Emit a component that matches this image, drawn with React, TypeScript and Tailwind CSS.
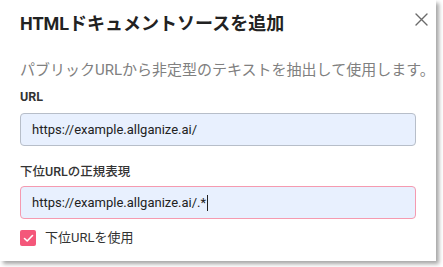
import React from 'react';

const font = { fontFamily: 'Roboto, "Noto Sans CJK JP", sans-serif' };

const CloseIcon: React.FC = () => (
  <svg width="13" height="13" viewBox="0 0 13 13" fill="none" stroke="#6b6b6b" strokeWidth="1.4" strokeLinecap="round">
    <path d="M1 1L12 12M12 1L1 12" />
  </svg>
);

const App: React.FC = () => {
  return (
    <div className="min-h-screen bg-white" style={font}>
      <div className="w-[436px] h-[261px] bg-white shadow-[3px_3px_4px_rgba(0,0,0,0.35)] px-5 pt-[12px]">
        <div className="flex items-start justify-between">
          <h1 className="text-[18px] leading-[24px] font-bold text-[#222]">HTMLドキュメントソースを追加</h1>
          <button className="mt-[1px] mr-[-12px] p-0">
            <CloseIcon />
          </button>
        </div>
        <p className="mt-[23px] whitespace-nowrap text-[15px] leading-[22px] text-[#808080]">
          パブリックURLから非定型のテキストを抽出して使用します。
        </p>
        <label className="block mt-[7px] text-[12.5px] leading-[18px] font-bold text-[#333]">URL</label>
        <div className="mt-[7px] h-[33px] rounded-[4px] border border-[#b7bec9] bg-[#e8f0fe] px-[11px] flex items-center text-[13px] text-[#222]">
          https://example.allganize.ai/
        </div>
        <label className="block mt-[17px] text-[12.5px] leading-[18px] font-medium text-[#333]">下位URLの正規表現</label>
        <div className="mt-[5px] h-[33px] rounded-[4px] border border-[#f59ab0] bg-[#e8f0fe] px-[11px] flex items-center text-[13px] text-[#222]">
          https://example.allganize.ai/.*
          <span className="ml-[1px] w-px h-[16px] bg-[#222]" />
        </div>
        <div className="mt-[9px] flex items-center gap-[9px]">
          <span className="w-4 h-4 rounded-[2px] bg-[#f4577a] flex items-center justify-center">
            <svg width="11" height="9" viewBox="0 0 11 9" fill="none" stroke="white" strokeWidth="1.6" strokeLinecap="round" strokeLinejoin="round">
              <path d="M1.5 4.5L4.2 7L9.5 1.5" />
            </svg>
          </span>
          <span className="text-[13px] leading-[20px] text-[#333]">下位URLを使用</span>
        </div>
      </div>
    </div>
  );
};

export default App;
